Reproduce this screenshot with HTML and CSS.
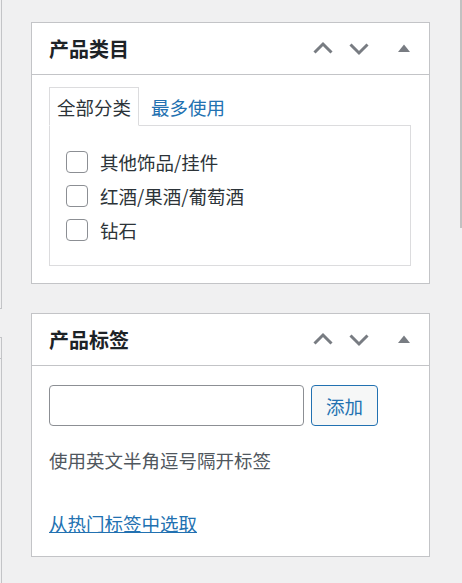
FILE: index.html
```html
<!DOCTYPE html>
<html lang="zh-CN">
<head>
    <meta charset="UTF-8">
    <meta name="viewport" content="width=device-width, initial-scale=1.0">
    <title>产品类目</title>
    <link rel="stylesheet" href="styles.css">
</head>
<body>
    <!-- edge of the main column -->
    <div class="main-col">
        <div class="main-box"></div>
        <div class="main-box second"><div class="main-inner"></div></div>
    </div>

    <div class="sidebar">
        <div class="postbox">
            <div class="postbox-header">
                <h2>产品类目</h2>
                <div class="handle-actions">
                    <button class="handle-btn" aria-label="上移">
                        <svg width="20" height="20" viewBox="0 0 20 20"><polyline points="1.5,13.5 10,5 18.5,13.5"/></svg>
                    </button>
                    <button class="handle-btn" aria-label="下移">
                        <svg width="20" height="20" viewBox="0 0 20 20"><polyline points="1.5,5.5 10,14 18.5,5.5"/></svg>
                    </button>
                    <button class="handle-btn toggle" aria-label="折叠">
                        <svg width="20" height="20" viewBox="0 0 20 20"><polygon class="fill" points="4,13 10,5.5 16,13"/></svg>
                    </button>
                </div>
            </div>
            <div class="inside">
                <ul class="tabs">
                    <li class="tab active">全部分类</li>
                    <li class="tab"><a href="#">最多使用</a></li>
                </ul>
                <div class="tabs-panel">
                    <ul class="checklist">
                        <li><label><input type="checkbox"> 其他饰品/挂件</label></li>
                        <li><label><input type="checkbox"> 红酒/果酒/葡萄酒</label></li>
                        <li><label><input type="checkbox"> 钻石</label></li>
                    </ul>
                </div>
            </div>
        </div>

        <div class="postbox">
            <div class="postbox-header">
                <h2>产品标签</h2>
                <div class="handle-actions">
                    <button class="handle-btn" aria-label="上移">
                        <svg width="20" height="20" viewBox="0 0 20 20"><polyline points="1.5,13.5 10,5 18.5,13.5"/></svg>
                    </button>
                    <button class="handle-btn" aria-label="下移">
                        <svg width="20" height="20" viewBox="0 0 20 20"><polyline points="1.5,5.5 10,14 18.5,5.5"/></svg>
                    </button>
                    <button class="handle-btn toggle" aria-label="折叠">
                        <svg width="20" height="20" viewBox="0 0 20 20"><polygon class="fill" points="4,13 10,5.5 16,13"/></svg>
                    </button>
                </div>
            </div>
            <div class="inside tags">
                <div class="tag-add">
                    <input type="text" class="tag-input">
                    <button class="button">添加</button>
                </div>
                <p class="howto">使用英文半角逗号隔开标签</p>
                <p class="tag-cloud-link"><a href="#">从热门标签中选取</a></p>
            </div>
        </div>
    </div>

    <div class="scrollbar"><div class="thumb"></div></div>
</body>
</html>
```

FILE: styles.css
```css
html, body { height: 100%; }
body {
    margin: 0;
    background: #f0f0f1;
    font-family: "Noto Sans CJK SC", "Noto Sans", sans-serif;
    font-size: 18.5px;
    color: #2c3338;
    display: flex;
    overflow: hidden;
}

/* main column edge on the left */
.main-col {
    width: 2px;
    display: flex;
    flex-direction: column;
}
.main-box {
    height: 309px;
    border-right: 1px solid #c3c4c7;
    border-bottom: 1px solid #c3c4c7;
    box-sizing: border-box;
    margin-bottom: 28px;
}
.main-box.second {
    flex: 1;
    height: auto;
    margin: 0;
    border-bottom: none;
    border-top: 1px solid #c3c4c7;
}
.main-inner {
    height: 20px;
    border-bottom: 1px solid #c3c4c7;
}

/* sidebar */
.sidebar {
    width: 399px;
    margin-left: 29px;
    padding-top: 22px;
}
.postbox {
    background: #fff;
    border: 1px solid #c3c4c7;
    margin-bottom: 29px;
}
.postbox-header {
    display: flex;
    align-items: center;
    height: 51px;
    border-bottom: 1px solid #c3c4c7;
    padding: 0 7px 0 17px;
}
.postbox-header h2 {
    margin: 0;
    flex: 1;
    font-size: 20px;
    font-weight: bold;
    color: #1d2327;
    line-height: 1;
}
.handle-actions { display: flex; }
.handle-btn {
    width: 36px;
    height: 36px;
    padding: 0;
    border: none;
    background: none;
    display: flex;
    align-items: center;
    justify-content: center;
    cursor: pointer;
}
.handle-btn.toggle { margin-left: 9px; }
.handle-btn svg polyline {
    fill: none;
    stroke: #787c82;
    stroke-width: 3;
}
.handle-btn svg .fill { fill: #787c82; }

.inside { padding: 12px 18px 17px 17px; }

/* category tabs */
.tabs {
    list-style: none;
    margin: 0;
    padding: 0;
    display: flex;
    gap: 4px;
}
.tab {
    height: 37px;
    padding: 0 7px;
    display: flex;
    align-items: center;
    border: 1px solid transparent;
    border-bottom: none;
    position: relative;
    z-index: 1;
}
.tab.active {
    border-color: #dcdcde;
    border-bottom: 1px solid #fff;
    background: #fff;
    color: #2c3338;
}
.tab a { color: #2271b1; text-decoration: none; }
.tab:not(.active) { height: 38px; }

.tabs-panel {
    margin-top: -1px;
    border: 1px solid #dcdcde;
    padding: 19px 16px 18px;
}
.checklist {
    list-style: none;
    margin: 0;
    padding: 0;
}
.checklist li {
    height: 34px;
    display: flex;
    align-items: center;
}
.checklist label {
    display: flex;
    align-items: center;
    gap: 12px;
}
.checklist input {
    appearance: none;
    -webkit-appearance: none;
    margin: 0;
    width: 22px;
    height: 22px;
    border: 1px solid #8c8f94;
    border-radius: 4px;
    background: #fff;
}

/* tags */
.inside.tags { padding-top: 19px; padding-bottom: 19px; }
.tag-add {
    display: flex;
    gap: 7px;
    height: 41px;
}
.tag-input {
    width: 255px;
    box-sizing: border-box;
    border: 1px solid #8c8f94;
    border-radius: 4px;
    margin: 0;
}
.button {
    width: 67px;
    box-sizing: border-box;
    border: 1px solid #2271b1;
    border-radius: 4px;
    background: #f6f7f7;
    color: #2271b1;
    font-family: inherit;
    font-size: 18.5px;
    padding: 0;
}
.howto {
    margin: 20px 0 0;
    line-height: 28px;
    color: #50575e;
}
.tag-cloud-link {
    margin: 35px 0 0;
    line-height: 28px;
}
.tag-cloud-link a { color: #2271b1; }

/* window scrollbar */
.scrollbar {
    margin-left: auto;
    width: 2px;
}
.scrollbar .thumb {
    height: 228px;
    background: #c1c1c1;
}
```
